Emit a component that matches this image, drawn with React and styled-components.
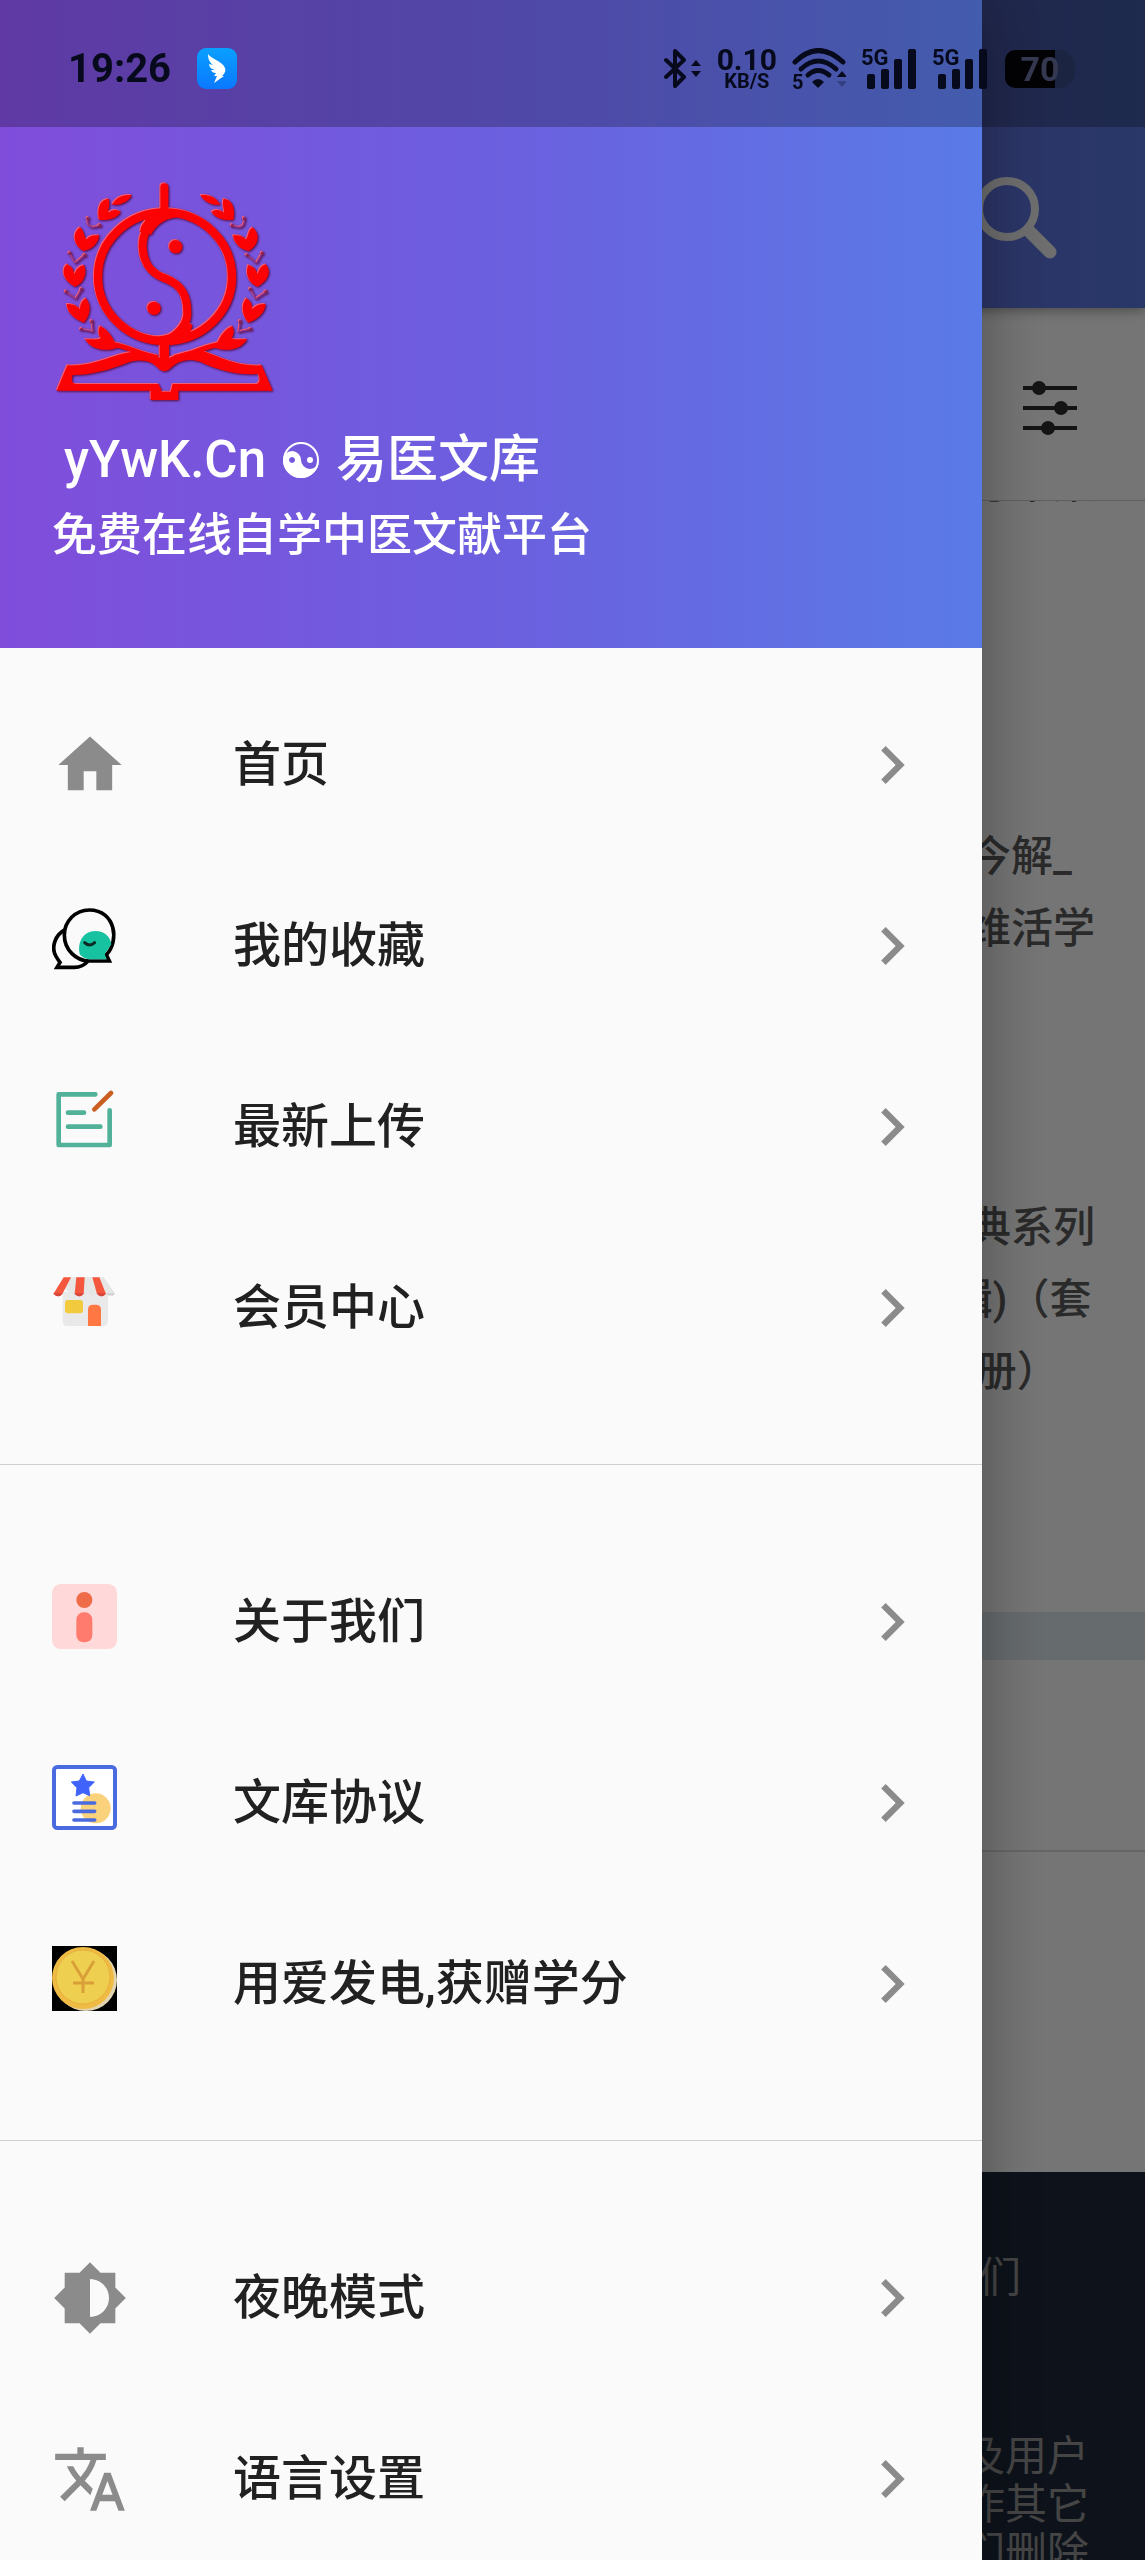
import styled, { createGlobalStyle, css } from "styled-components";
import {
  MdBrightness6,
  MdChevronRight,
  MdHome,
  MdTranslate,
} from "react-icons/md";

const GlobalStyle = createGlobalStyle`
  * {
    box-sizing: border-box;
  }
  body {
    margin: 0;
    font-family: Roboto, "Noto Sans CJK SC", sans-serif;
  }
  h1, p {
    margin: 0;
  }
  a {
    color: inherit;
    text-decoration: none;
  }
  svg {
    display: block;
    flex-shrink: 0;
  }
`;

const brandGradient = css`
  background: linear-gradient(90deg, #804ddb 0%, #6b60df 52%, #5a7be7 100%);
`;

/* ---------- page under the drawer ---------- */
const Page = styled.div`
  height: 100vh;
  display: flex;
  flex-direction: column;
  overflow: hidden;
  background: #fff;
`;
const AppBar = styled.header`
  display: flex;
  justify-content: flex-end;
  align-items: center;
  height: 308px;
  padding: 127px 88px 0 0;
  flex-shrink: 0;
  background: linear-gradient(90deg, #804ddb 0%, #5a7ae2 100%);
  box-shadow: 0 2px 12px rgba(0, 0, 0, 0.4);
  z-index: 1;
`;
const PlainButton = styled.button`
  padding: 0;
  border: 0;
  background: none;
  color: inherit;
`;
const FilterBar = styled.div`
  display: flex;
  justify-content: flex-end;
  align-items: center;
  height: 193px;
  padding: 8px 68px 0 0;
  flex-shrink: 0;
  border-bottom: 1px solid #d0d0d0;
  color: #2d2d2d;
`;
const Results = styled.main`
  flex: 1;
  display: flex;
  flex-direction: column;
  align-items: flex-end;
  min-height: 0;
  overflow: hidden;
`;
const BookTitle = styled.p`
  width: 260px;
  margin-top: ${(p) => p.$gap}px;
  font-size: 42px;
  line-height: 72px;
  white-space: nowrap;
  color: #5c5c5c;
  font-weight: 500;
`;
const Band = styled.div`
  height: 48px;
  flex-shrink: 0;
  background: #dfe9ef;
`;
const Pager = styled.div`
  height: 192px;
  flex-shrink: 0;
  border-bottom: 2px solid #dedede;
`;
const Blank = styled.div`
  height: 320px;
  flex-shrink: 0;
`;
const Footer = styled.footer`
  display: flex;
  flex-direction: column;
  align-items: flex-end;
  height: 388px;
  padding-top: 82px;
  flex-shrink: 0;
  background: #1e293b;
  color: #969696;
  font-size: 42px;
  line-height: 48px;
`;
const FooterText = styled.p`
  width: 266px;
  padding-left: ${(p) => p.$indent || 0}px;
  margin-bottom: 131px;
  white-space: nowrap;
`;
const Backdrop = styled.div`
  position: fixed;
  inset: 0;
  z-index: 2;
  background: rgba(0, 0, 0, 0.54);
`;

/* ---------- drawer ---------- */
const Drawer = styled.aside`
  position: fixed;
  top: 0;
  bottom: 0;
  left: 0;
  z-index: 3;
  width: calc(100% - 163px);
  overflow: hidden;
  background: #fafafa;
  box-shadow: 0 0 64px rgba(0, 0, 0, 0.34);
`;
const DrawerHeader = styled.div`
  ${brandGradient}
  padding: 182px 52px 74px;
  color: #fff;
`;
const Title = styled.h1`
  display: flex;
  align-items: center;
  gap: 16px;
  margin-top: 20px;
  padding-left: 12px;
  font-size: 51px;
  line-height: 76px;
  font-weight: 500;
`;
const Subtitle = styled.p`
  font-size: 45px;
  line-height: 76px;
  font-weight: 500;
`;
const Group = styled.nav`
  padding: ${(p) => (p.$first ? 26 : 66)}px 0 66px;
  border-top: ${(p) => (p.$first ? 0 : 1)}px solid #cfcfcf;
`;
const Item = styled.a`
  display: flex;
  align-items: center;
  height: 181px;
  padding: 0 52px;
  color: #8b8b8b;
`;
const IconBox = styled.span`
  width: 76px;
  height: 76px;
  margin-right: 105px;
`;
const Label = styled.span`
  flex: 1;
  font-size: 48px;
  line-height: 72px;
  font-weight: 500;
  color: #212121;
`;

/* ---------- status bar ---------- */
const StatusBar = styled.div`
  position: fixed;
  top: 0;
  left: 0;
  right: 0;
  z-index: 4;
  display: flex;
  align-items: center;
  justify-content: space-between;
  height: 127px;
  padding: 10px 70px 0 68px;
  background: rgba(0, 0, 0, 0.25);
  color: #070a1c;
`;
const StatusSide = styled.div`
  display: flex;
  align-items: center;
  gap: ${(p) => p.$gap}px;
`;
const Clock = styled.span`
  font-size: 40px;
  line-height: 48px;
  font-weight: 700;
`;
const Speed = styled.span`
  display: flex;
  flex-direction: column;
  align-items: center;
  font-size: 30px;
  line-height: 24px;
  font-weight: 700;
`;
const Unit = styled.small`
  font-size: 20px;
  line-height: 18px;
`;
const Battery = styled.span`
  display: flex;
  align-items: center;
  justify-content: center;
  width: 70px;
  height: 38px;
  margin-left: 2px;
  border-radius: 10px 16px 16px 10px;
  background: linear-gradient(90deg, #020205 72%, #1b2440 72%);
  color: #343850;
  font-size: 34px;
  line-height: 38px;
  font-weight: 700;
`;

function DingIcon() {
  return (
    <svg width="40" height="41" viewBox="0 0 40 41">
      <defs>
        <linearGradient id="ding" x1="0" y1="0" x2="0" y2="1">
          <stop offset="0" stopColor="#0aa0ff" />
          <stop offset="1" stopColor="#0a78ff" />
        </linearGradient>
      </defs>
      <rect width="40" height="41" rx="9" fill="url(#ding)" />
      <path
        d="M11 6c3 5 14 7 17 14 1 3 0 5-3 8h2l-10 7 3-7h-3l2-3c-3 0-4-1-5-3l4 0c-4-1-6-3-6-6l4 1c-4-3-5-7-5-11z"
        fill="#fff"
      />
    </svg>
  );
}

function BluetoothIcon() {
  return (
    <svg width="38" height="41" viewBox="0 0 38 41">
      <path
        d="M2 12l18 17-9 9V3l9 9L2 29"
        fill="none"
        stroke="currentColor"
        strokeWidth="4"
        strokeLinejoin="round"
        strokeLinecap="round"
      />
      <path d="M27 18l5-6 5 6zM27 23h10l-5 6z" fill="currentColor" />
    </svg>
  );
}

function WifiIcon() {
  return (
    <svg width="54" height="42" viewBox="0 0 54 42">
      <g fill="none" stroke="currentColor" strokeWidth="5" strokeLinecap="round">
        <path d="M3 14Q26-9 51 14" />
        <path d="M9 21Q26 5 44 21" />
        <path d="M16 27Q26 18 37 27" />
      </g>
      <path d="M26 40l-6-6q6-6 12 0z" fill="currentColor" />
      <path d="M45 29l5-6 5 6z" fill="currentColor" />
      <path d="M45 33h10l-5 6z" fill="currentColor" opacity=".3" />
      <text x="0" y="41" fontSize="20" fontWeight="700" fill="currentColor">
        5
      </text>
    </svg>
  );
}

function SignalIcon() {
  return (
    <svg width="56" height="41" viewBox="0 0 56 41" fill="currentColor">
      <text x="0" y="17" fontSize="22" fontWeight="700">
        5G
      </text>
      <rect x="6" y="26" width="8" height="15" rx="2" />
      <rect x="20" y="21" width="8" height="20" rx="2" />
      <rect x="33" y="11" width="8" height="30" rx="2" />
      <rect x="47" y="1" width="8" height="40" rx="2" />
    </svg>
  );
}

function LaurelHalf() {
  return (
    <>
      <path d="M246 104C260 80 280 74 305 75 298 92 275 108 246 104z" />
      <path d="M207 150C200 115 210 88 236 86c6 19-4 34 0 42 9-10 26-10 36-2-10 19-37 26-65 24z" />
      <path d="M160 243C130 225 125 190 150 172c15 13 10 28 20 36 8-10 20-14 38-12-3 24-23 44-48 47z" />
      <path d="M134 350C105 335 90 305 110 283c20 7 20 22 24 29 4-12 11-22 28-27 13 30-7 60-28 65z" />
      <path d="M162 458C135 448 112 430 110 402c20-2 35 8 40 16 0-13 5-26 18-33 17 20 14 50-6 73z" />
      <path d="M165 508c20-2 35 4 47-4-10-14-6-26-2-36 25 10 35 32 45 49 40 8 85 31 130 39l-5 19c-50-20-90-35-118-42-22 9-72 15-97-25z" />
      <g fill="none" stroke="#8a2f86" strokeWidth="4">
        <path d="M174 148C172 165 180 180 210 167" />
        <path d="M120 250l17 30 28-24" />
        <path d="M108 366l30 21 17-29" />
        <path d="M155 478l35 8-4-31" />
      </g>
      <g fill="#8a2457">
        <circle cx="174" cy="146" r="5" />
        <circle cx="210" cy="167" r="5" />
        <circle cx="120" cy="250" r="5" />
        <circle cx="165" cy="256" r="5" />
        <circle cx="109" cy="366" r="5" />
        <circle cx="155" cy="358" r="5" />
        <circle cx="155" cy="478" r="5" />
        <circle cx="186" cy="455" r="5" />
      </g>
    </>
  );
}

const LogoSvg = styled.svg`
  margin-left: 4px;
  filter: drop-shadow(-1px -1px 0 #f0607a) drop-shadow(1px 1px 1px #5a0a3c);
`;

function Logo() {
  return (
    <LogoSvg width="218" height="220" viewBox="78 36 654 660" fill="#fb0204">
      <g fill="none" stroke="#fb0204" strokeLinecap="round">
        <path d="M403 52v75" strokeWidth="24" />
        <ellipse cx="405" cy="320" rx="201" ry="193" strokeWidth="25" />
        <path
          d="M400 140C350 165 336 195 338 235c4 55 37 80 67 90 50 20 67 50 67 105 0 30-17 55-57 80"
          strokeWidth="24"
        />
        <path d="M403 525v50" strokeWidth="28" />
      </g>
      <path d="M340 140l70-10 40 12c-50 0-75 30-86 52l-34-8q2-20 16-34zM480 500l-60 20-55-20c50 2 80-16 92-46l30 10q-2 16-7 26z" />
      <circle cx="437" cy="230" r="20" />
      <circle cx="372" cy="415" r="20" />
      <path
        fillRule="evenodd"
        d="M80 662l32-76c78 4 138-34 196-41 34-5 62 10 95 25 37-18 77-32 117-27 50 17 100 47 175 43l33 76H445v28H362v-28zM128 615c52 0 112-15 172-40 40-10 70 0 88 23q15 12 30 0c22-23 52-36 92-23 60 27 110 40 174 37q11 23-4 30H428l-6 23H396l-10-23H140q-20-2-12-27z"
      />
      <LaurelHalf />
      <g transform="translate(817 0) scale(-1 1)">
        <LaurelHalf />
      </g>
    </LogoSvg>
  );
}

function YinYang() {
  return (
    <svg width="38" height="44" viewBox="0 0 38 38" role="img" aria-label="☯">
      <circle cx="19" cy="19" r="17" fill="none" stroke="#fff" strokeWidth="2" />
      <path
        fillRule="evenodd"
        d="M1 19a9 9 0 0 1 18 0 9 9 0 0 0 18 0 18 18 0 0 1-36 0zM10 16a3 3 0 1 0 .1 0z"
        fill="#fff"
      />
      <circle cx="28" cy="19" r="3" fill="#fff" />
    </svg>
  );
}

function ChatIcon() {
  return (
    <svg width="65" height="65" viewBox="0 0 195 195">
      <g stroke="#000" strokeWidth="11" fill="#fafafa">
        <path d="M38 66C10 80-4 118 12 145q6 10 12 18l-9 15h52c18 0 30-6 40-18" />
        <path
          d="M112 6a75 75 0 0 0-75 75c0 45 36 78 75 78h60l-9-19c40-40 28-134-51-134z"
        />
      </g>
      <path
        d="M84 140c-10-36 10-71 46-71 28 0 46 18 48 40l-20 30 6 15h-54q-14-2-26-14z"
        fill="#16c2a0"
      />
      <path
        d="M98 104q14 14 30 0"
        fill="none"
        stroke="#0b2a26"
        strokeWidth="9"
        strokeLinecap="round"
      />
    </svg>
  );
}

function UploadIcon() {
  return (
    <svg width="65" height="65" viewBox="0 0 195 195" fill="none" strokeLinecap="round">
      <path
        d="M130 16H20v152h153V64M48 71h48M48 113h97"
        stroke="#52b199"
        strokeWidth="14"
        strokeLinejoin="round"
      />
      <path d="M127 61l50-49" stroke="#cb5f22" strokeWidth="14" />
    </svg>
  );
}

function ShopIcon() {
  return (
    <svg width="65" height="65" viewBox="0 0 195 195">
      <path d="M32 65h136v88q0 15-14 15H45q-13 0-13-15z" fill="#e9e9e9" />
      <path d="M52 22h103l34 48q-10 12-24 0-14 14-27 0-14 14-28 0-14 14-28 0-14 14-27 0L32 50z" fill="#e6e6e6" />
      <path d="M163 70q6 10 13 6 9 4 13-6z" fill="#cfcfd2" />
      <path
        d="M35 22h22L31 72q-12 14-27 0zM73 22h25l-3 50q-13 14-27 0zM121 22h21l20 50q-13 14-27 0z"
        fill="#f4563e"
      />
      <path
        d="M4 70h28q-12 18-28 0zM67 70h28q-12 18-28 0zM134 70h27q-12 18-27 0z"
        fill="#d8463c"
      />
      <rect x="39" y="90" width="54" height="40" rx="9" fill="#f2ca3e" />
      <path d="M108 168v-50q0-14 15-14h9q15 0 15 14v50z" fill="#ff7743" />
    </svg>
  );
}

function InfoIcon() {
  return (
    <svg width="65" height="65" viewBox="0 0 195 195">
      <rect width="195" height="195" rx="26" fill="#ffd9d9" />
      <circle cx="97" cy="48" r="24" fill="#ee6d48" />
      <rect x="73" y="85" width="48" height="90" rx="22" fill="#ff7b6e" />
    </svg>
  );
}

function AgreementIcon() {
  return (
    <svg width="65" height="65" viewBox="0 0 195 195">
      <rect x="6" y="6" width="183" height="183" rx="10" fill="#fff" stroke="#4a6ae0" strokeWidth="12" />
      <circle cx="131" cy="130" r="45" fill="#fbd27c" />
      <path
        d="M93 27l10 21 24 3-17 17 3 24-20-9-21 10 3-25-17-17 24-3z"
        fill="#3f63fb"
        stroke="#3f63fb"
        strokeWidth="3"
        strokeLinejoin="round"
      />
      <path d="M66 114h62M66 139h62M66 165h62" stroke="#4a6ae0" strokeWidth="11" strokeLinecap="round" />
    </svg>
  );
}

function CoinIcon() {
  return (
    <svg width="65" height="65" viewBox="0 0 65 65">
      <rect width="65" height="65" fill="#000" />
      <circle cx="34" cy="34" r="31" fill="#e3d5b0" />
      <circle cx="31" cy="32" r="31" fill="#f0bb45" />
      <circle cx="31" cy="31" r="27" fill="#efcf50" stroke="#e6b03c" strokeWidth="1" />
      <path
        d="M20 15l11 18 11-18M31 33v14M21 37h21"
        fill="none"
        stroke="#d9a038"
        strokeWidth="3"
      />
    </svg>
  );
}

function SearchIcon() {
  return (
    <svg width="82" height="82" viewBox="0 0 82 82" fill="none" stroke="#f0f0f0">
      <circle cx="32" cy="32" r="28" strokeWidth="8" />
      <path d="M54 54l21 21" strokeWidth="13" strokeLinecap="round" />
    </svg>
  );
}

function TuneIcon() {
  return (
    <svg width="54" height="54" viewBox="0 0 54 54" fill="currentColor">
      <path d="M0 5h54v4H0zM0 25h54v4H0zM0 45h54v4H0z" />
      <circle cx="16" cy="7" r="7" />
      <circle cx="38" cy="27" r="7" />
      <circle cx="25" cy="47" r="7" />
    </svg>
  );
}

const groups = [
  [
    { label: "首页", icon: <MdHome size={76} /> },
    { label: "我的收藏", icon: <ChatIcon /> },
    { label: "最新上传", icon: <UploadIcon /> },
    { label: "会员中心", icon: <ShopIcon /> },
  ],
  [
    { label: "关于我们", icon: <InfoIcon /> },
    { label: "文库协议", icon: <AgreementIcon /> },
    { label: "用爱发电,获赠学分", icon: <CoinIcon /> },
  ],
  [
    { label: "夜晚模式", icon: <MdBrightness6 size={76} /> },
    { label: "语言设置", icon: <MdTranslate size={76} /> },
  ],
];

function App() {
  return (
    <>
      <GlobalStyle />
      <Page>
        <AppBar>
          <PlainButton aria-label="搜索">
            <SearchIcon />
          </PlainButton>
        </AppBar>
        <FilterBar>
          <PlainButton aria-label="筛选">
            <TuneIcon />
          </PlainButton>
        </FilterBar>
        <Results>
          <BookTitle $gap={-53}>中医方术集</BookTitle>
          <BookTitle $gap={301}>
            经典今解_
            <br />
            的思维活学
          </BookTitle>
          <BookTitle $gap={227}>
            医经典系列
            <br />
            第1辑)（套
            <br />共12册）
          </BookTitle>
        </Results>
        <Band />
        <Pager />
        <Blank />
        <Footer>
          <FooterText $indent={16}>于我们</FooterText>
          <FooterText>
            书籍及用户
            <br />
            不得作其它
            <br />
            请我们删除
          </FooterText>
        </Footer>
      </Page>
      <Backdrop />
      <Drawer>
        <DrawerHeader>
          <Logo />
          <Title>
            yYwK.Cn <YinYang /> 易医文库
          </Title>
          <Subtitle>免费在线自学中医文献平台</Subtitle>
        </DrawerHeader>
        {groups.map((items, i) => (
          <Group key={i} $first={i === 0}>
            {items.map(({ label, icon }) => (
              <Item key={label} href="#">
                <IconBox>{icon}</IconBox>
                <Label>{label}</Label>
                <MdChevronRight size={76} />
              </Item>
            ))}
          </Group>
        ))}
      </Drawer>
      <StatusBar>
        <StatusSide $gap={26}>
          <Clock>19:26</Clock>
          <DingIcon />
        </StatusSide>
        <StatusSide $gap={15}>
          <BluetoothIcon />
          <Speed>
            0.10
            <Unit>KB/S</Unit>
          </Speed>
          <WifiIcon />
          <SignalIcon />
          <SignalIcon />
          <Battery>70</Battery>
        </StatusSide>
      </StatusBar>
    </>
  );
}

export default App;
